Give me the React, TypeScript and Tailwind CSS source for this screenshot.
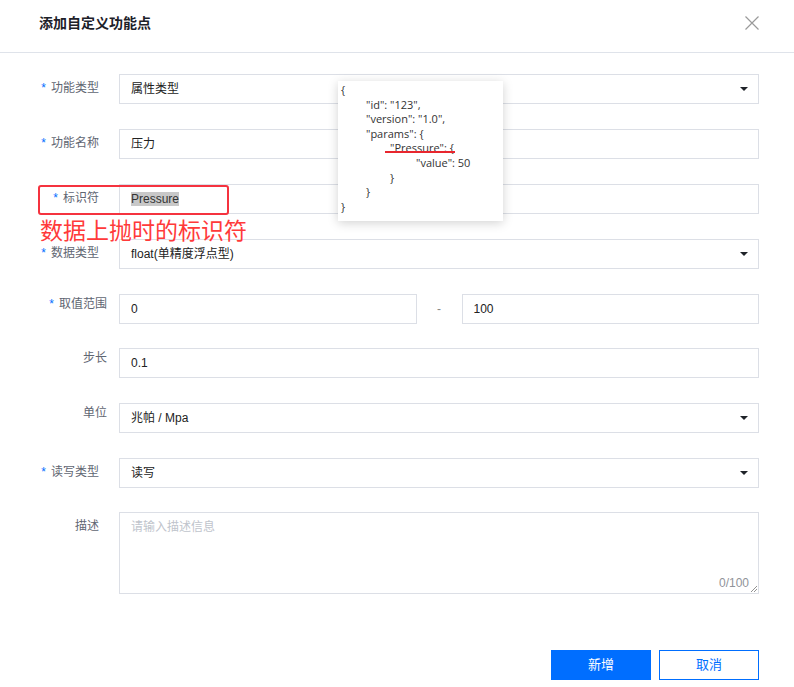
import React from "react";

const FONT = { fontFamily: '"Liberation Sans", "Noto Sans CJK SC", sans-serif' };

const Arrow = () => (
  <svg width="8" height="4" viewBox="0 0 8 4" className="mr-[10px]">
    <path d="M0 0 L8 0 L4 4 Z" fill="#1f2329" />
  </svg>
);

const Label = ({
  text,
  required,
  alt,
}: {
  text: string;
  required?: boolean;
  alt?: boolean;
}) => (
  <div
    className={`w-[119px] shrink-0 text-right text-[12px] leading-[14px] text-[#5f6672] ${
      alt ? "pr-[12px] pt-[3px]" : "pr-[20px] pt-[7px]"
    }`}
  >
    {required && <span className="mr-[5px] text-[#006eff]">*</span>}
    {text}
  </div>
);

const Field = ({
  value,
  select,
  className = "",
  children,
}: {
  value?: string;
  select?: boolean;
  className?: string;
  children?: React.ReactNode;
}) => (
  <div
    className={`flex h-[30px] items-center justify-between border border-[#dcdfe6] bg-white pl-[11px] text-[12px] text-[#222] ${className}`}
  >
    <span>{children ?? value}</span>
    {select && <Arrow />}
  </div>
);

const Row = ({
  children,
  className = "mb-[25px]",
}: {
  children: React.ReactNode;
  className?: string;
}) => <div className={`flex ${className}`}>{children}</div>;

const JsonTip = () => (
  <div
    className="absolute left-[338px] top-[81px] h-[140px] w-[165px] bg-white pl-[3px] pt-[2px] text-[11px] leading-[14.6px] text-[#333] shadow-[0_2px_10px_rgba(0,0,0,0.18)]"
    style={{ fontFamily: '"Open Sans", sans-serif' }}
  >
    <div>{"{"}</div>
    <div className="pl-[25px]">"id": "123",</div>
    <div className="pl-[25px]">"version": "1.0",</div>
    <div className="pl-[25px]">"params": {"{"}</div>
    <div className="pl-[49px]">"Pressure": {"{"}</div>
    <div className="pl-[75px]">"value": 50</div>
    <div className="pl-[49px]">{"}"}</div>
    <div className="pl-[25px]">{"}"}</div>
    <div>{"}"}</div>
    <div className="absolute left-[47px] top-[70px] h-[2px] w-[70px] bg-[#e8262e]" />
  </div>
);

export default function App() {
  return (
    <div className="relative h-[687px] w-[794px] overflow-hidden bg-white" style={FONT}>
      {/* header */}
      <div className="flex h-[53px] items-start justify-between border-b border-[#dfe3ea] pl-[39px] pr-[35px] pt-[15px]">
        <div className="text-[14px] font-bold leading-[16px] text-[#1d2129]">添加自定义功能点</div>
        <svg width="14" height="14" viewBox="0 0 14 14" className="mt-[1px]">
          <path d="M0.5 0.5 L13.5 13.5 M13.5 0.5 L0.5 13.5" stroke="#9a9a9a" strokeWidth="1.2" />
        </svg>
      </div>

      {/* form */}
      <div className="pr-[35px] pt-[21px]">
        <Row>
          <Label text="功能类型" required />
          <Field value="属性类型" select className="flex-1" />
        </Row>
        <Row>
          <Label text="功能名称" required />
          <Field value="压力" className="flex-1" />
        </Row>
        <Row>
          <Label text="标识符" required />
          <Field className="flex-1">
            <span className="bg-[#c8c8c8] text-[#333]">Pressure</span>
          </Field>
        </Row>
        <Row>
          <Label text="数据类型" required />
          <Field value="float(单精度浮点型)" select className="flex-1" />
        </Row>
        <Row className="mb-[24px]">
          <Label text="取值范围" required alt />
          <div className="flex flex-1 items-center">
            <Field value="0" className="flex-1" />
            <div className="w-[45px] text-center text-[12px] text-[#888]">-</div>
            <Field value="100" className="flex-1" />
          </div>
        </Row>
        <Row>
          <Label text="步长" alt />
          <Field value="0.1" className="flex-1" />
        </Row>
        <Row>
          <Label text="单位" alt />
          <Field value="兆帕 / Mpa" select className="flex-1" />
        </Row>
        <Row className="mb-[24px]">
          <Label text="读写类型" required />
          <Field value="读写" select className="flex-1" />
        </Row>
        <Row className="mb-0">
          <Label text="描述" />
          <div className="relative h-[82px] flex-1 border border-[#dcdfe6] pl-[11px] pt-[6px] text-[12px] leading-[16px] text-[#c0c4cc]">
            请输入描述信息
            <span className="absolute bottom-[2px] right-[9px] text-[12px] text-[#909399]">0/100</span>
            <svg width="6" height="6" viewBox="0 0 6 6" className="absolute bottom-[1px] right-[1px]">
              <path d="M0 6 L6 0 M3 6 L6 3" stroke="#777" strokeWidth="0.8" />
            </svg>
          </div>
        </Row>

        {/* buttons */}
        <div className="mt-[56px] flex justify-end gap-[8px]">
          <button className="h-[30px] w-[100px] bg-[#006eff] text-[13px] text-white">新增</button>
          <button className="h-[30px] w-[100px] border border-[#006eff] bg-white text-[13px] text-[#006eff]">
            取消
          </button>
        </div>
      </div>

      {/* annotations */}
      <JsonTip />
      <div className="absolute left-[38px] top-[185px] h-[30px] w-[191px] rounded-[3px] border-2 border-[#f5333f]" />
      <div
        className="absolute left-[40px] top-[215px] text-[23px] leading-[28px] text-[#ff3a3a]"
        style={{ fontFamily: '"Noto Sans CJK SC", sans-serif' }}
      >
        数据上抛时的标识符
      </div>
    </div>
  );
}
